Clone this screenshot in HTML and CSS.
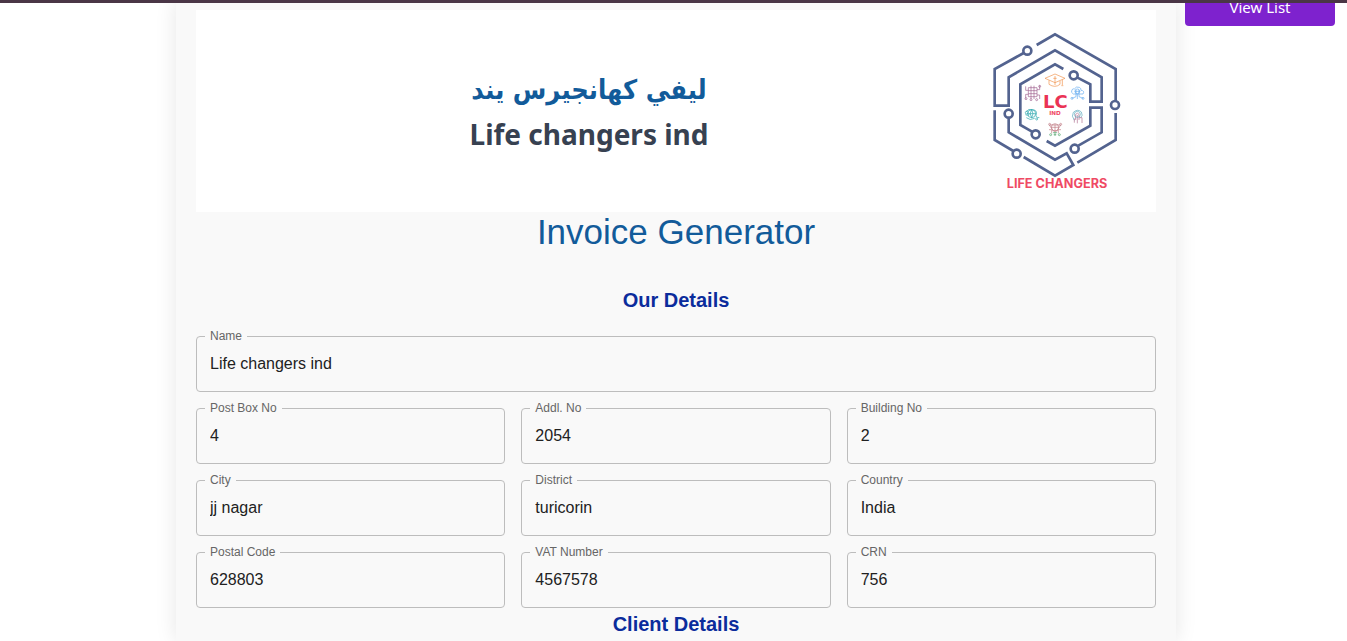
FILE: index.html
```html
<!DOCTYPE html>
<html lang="en">
<head>
    <meta charset="UTF-8">
    <meta name="viewport" content="width=device-width, initial-scale=1.0">
    <title>Invoice Generator</title>
    <link rel="stylesheet" href="styles.css">
</head>
<body>

<div class="top-bar"></div>
<button type="button" class="view-list-btn">View List</button>

<main class="invoice-container">
    <!-- Company banner -->
    <header class="banner">
        <div class="banner-names">
            <p class="name-arabic" lang="ar" dir="rtl">ليفي كهانجيرس يند</p>
            <p class="name-english">Life changers ind</p>
        </div>
        <svg class="logo" viewBox="0 3 450 510" role="img" aria-label="Life Changers logo">
            <!-- Circuit hexagons -->
            <g class="circuit">
                <path d="M170 60 L225 28 L407 132 V228 M407 264 V345 L292 413"/>
                <path d="M131 84 L44 132 V242 H86 V157 L225 76 L365 157 V230 H331 V178 L291 157"/>
                <path d="M44 256 V345 L100 378 M131 396 L225 452 L280 420 L260 385 L225 404 L86 322 V280"/>
                <path d="M250 132 L225 118 L121 178 V300 L156 320"/>
                <path d="M200 348 L225 362 L331 302 V248 H365 V322 L295 362"/>
                <circle cx="142" cy="77" r="12"/>
                <circle cx="405" cy="240" r="12"/>
                <circle cx="281" cy="151" r="12"/>
                <circle cx="86" cy="266" r="12"/>
                <circle cx="110" cy="386" r="12"/>
                <circle cx="167" cy="328" r="12"/>
                <circle cx="284" cy="371" r="12"/>
            </g>
            <!-- Graduation cap -->
            <g class="mini orange">
                <path d="M225 147 L255 160 L225 173 L195 160 Z M207 166 V178 Q225 190 240 178 V168 M247 164 V180 M244 182 H250 M225 153 V180 M220 160 H230"/>
            </g>
            <!-- Chip -->
            <g class="mini purple">
                <path d="M145 188 H171 V215 H145 Z M145 197 H171 M145 206 H171 M153 182 V222 M162 182 V222 M137 184 V196 H145 M179 181 V194 H171 M137 220 V208 H145 M179 222 V210 H171"/>
                <circle cx="138" cy="221" r="3"/><circle cx="179" cy="184" r="3"/><circle cx="153" cy="224" r="3"/><circle cx="170" cy="224" r="3"/>
            </g>
            <!-- Cloud -->
            <g class="mini blue">
                <path d="M280 207 Q271 203 276 194 Q280 190 283 192 Q288 183 298 187 Q304 190 303 196 Q315 197 309 207 H280 M284 199 H301 M288 195 V215 M297 195 V215 M288 215 L277 220 M297 215 L309 220 M292 207 V222"/>
                <circle cx="276" cy="220" r="3"/><circle cx="309" cy="220" r="3"/><circle cx="292" cy="199" r="7"/>
            </g>
            <!-- Globe with orbit -->
            <g class="mini teal">
                <circle cx="155" cy="266" r="12"/>
                <path d="M138 260 Q145 250 158 254 Q172 256 169 267 Q165 278 178 278 M139 278 Q150 288 164 280 M143 266 H167 M155 254 Q146 266 155 278 Q163 266 155 254 M136 269 Q143 273 148 269"/>
                <circle cx="140" cy="263" r="4"/><circle cx="170" cy="282" r="3"/>
            </g>
            <!-- Hand and gear -->
            <g class="mini mixed">
                <path class="cyan" d="M283 286 Q273 273 280 262 Q293 250 304 261 Q310 272 302 278"/>
                <path d="M287 285 V268 Q292 261 297 268 V285 M297 278 H306 V294 M287 279 L283 282 V293 M292 270 V295"/>
                <circle class="cyan" cx="292" cy="268" r="9"/>
            </g>
            <!-- Bulb network -->
            <g class="mini bulb">
                <path d="M208 300 H242 M208 300 L220 318 H231 L242 300 M213 307 H237 M207 314 H215 V325 M243 314 H235 V325 M225 298 V322"/>
                <path class="green" d="M219 323 H231 M221 329 H229 M225 322 V333"/>
                <circle cx="225" cy="307" r="11"/><circle cx="209" cy="298" r="3"/><circle cx="242" cy="298" r="3"/>
                <circle class="green" cx="212" cy="329" r="3"/><circle class="green" cx="238" cy="329" r="3"/>
            </g>
            <text class="logo-lc" x="226" y="250" text-anchor="middle">LC</text>
            <text class="logo-ind" x="225" y="270" text-anchor="middle">IND</text>
            <text class="logo-title" x="231" y="490" text-anchor="middle">LIFE CHANGERS</text>
        </svg>
    </header>

    <h1>Invoice Generator</h1>

    <form>
        <h2>Our Details</h2>
        <div class="field-grid">
            <div class="field full">
                <label for="name">Name</label>
                <input type="text" id="name" value="Life changers ind">
            </div>
            <div class="field">
                <label for="post-box">Post Box No</label>
                <input type="text" id="post-box" value="4">
            </div>
            <div class="field">
                <label for="addl-no">Addl. No</label>
                <input type="text" id="addl-no" value="2054">
            </div>
            <div class="field">
                <label for="building-no">Building No</label>
                <input type="text" id="building-no" value="2">
            </div>
            <div class="field">
                <label for="city">City</label>
                <input type="text" id="city" value="jj nagar">
            </div>
            <div class="field">
                <label for="district">District</label>
                <input type="text" id="district" value="turicorin">
            </div>
            <div class="field">
                <label for="country">Country</label>
                <input type="text" id="country" value="India">
            </div>
            <div class="field">
                <label for="postal-code">Postal Code</label>
                <input type="text" id="postal-code" value="628803">
            </div>
            <div class="field">
                <label for="vat-number">VAT Number</label>
                <input type="text" id="vat-number" value="4567578">
            </div>
            <div class="field">
                <label for="crn">CRN</label>
                <input type="text" id="crn" value="756">
            </div>
        </div>
        <h2>Client Details</h2>
    </form>
</main>

</body>
</html>
```
FILE: styles.css
```css
* {
    box-sizing: border-box;
}

body {
    margin: 0;
    padding-left: 5px;
    background: #fff;
    font-family: "Liberation Sans", Arial, sans-serif;
    overflow-x: hidden;
}

.top-bar {
    position: fixed;
    top: 0;
    left: 0;
    right: 0;
    height: 3px;
    background: #4a3646;
    z-index: 2;
}

.view-list-btn {
    position: fixed;
    top: -12px;
    right: 12px;
    width: 150px;
    height: 38px;
    border: none;
    border-radius: 4px;
    background: #7e22ce;
    color: #fff;
    font-family: "Noto Sans", sans-serif;
    font-size: 15px;
    cursor: pointer;
    z-index: 1;
}

.invoice-container {
    max-width: 1000px;
    min-height: 100vh;
    margin: 0 auto;
    padding: 10px 20px 0;
    background: #f9f9f9;
    box-shadow: 0 0 20px rgba(0, 0, 0, 0.1);
}

/* Banner */
.banner {
    display: grid;
    grid-template-columns: 1fr 150px;
    align-items: center;
    height: 202px;
    padding: 0 26px 0 2px;
    background: #fff;
}

.banner-names {
    padding-top: 2px;
    text-align: center;
}

.banner-names p {
    margin: 0;
    font-weight: 700;
    line-height: 44px;
}

.name-arabic {
    font-family: "DejaVu Sans Condensed", "DejaVu Sans", sans-serif;
    font-size: 27px;
    color: #125b9a;
}

.name-english {
    font-family: "Noto Sans", sans-serif;
    font-size: 28px;
    color: #374151;
}

.logo {
    width: 150px;
    height: 170px;
}

.circuit {
    fill: none;
    stroke: #53638f;
    stroke-width: 8;
}

.mini {
    fill: none;
    stroke-width: 2;
}

.orange { stroke: #f0914a; }
.purple { stroke: #a0618f; }
.blue { stroke: #62aaf0; }
.teal { stroke: #22a3ab; }
.mixed { stroke: #b0708f; }
.bulb { stroke: #c07a84; }
.cyan { stroke: #5aa9bd; }
.green { stroke: #4fa56a; }

.logo text {
    font-weight: 700;
    fill: #ef4a64;
}

.logo .logo-lc {
    font-family: "DejaVu Sans", sans-serif;
    font-size: 54px;
    fill: #ea3355;
}

.logo-ind {
    font-family: "DejaVu Sans", sans-serif;
    font-size: 17px;
}

.logo-title {
    font-family: Inter, sans-serif;
    font-size: 38px;
}

/* Headings */
h1 {
    margin: 0 0 32px;
    font-size: 35px;
    font-weight: 400;
    line-height: 40px;
    text-align: center;
    color: #125b9a;
}

h2 {
    margin: 0;
    font-size: 20px;
    font-weight: 700;
    line-height: 32px;
    text-align: center;
    color: #0b2c9c;
}

/* Form fields */
.field-grid {
    display: grid;
    grid-template-columns: repeat(3, 1fr);
    gap: 16px;
    padding-top: 20px;
}

.field {
    position: relative;
}

.full {
    grid-column: 1 / -1;
}

.field label {
    position: absolute;
    top: -8px;
    left: 9px;
    padding: 0 5px;
    background: #f9f9f9;
    color: #666;
    font-size: 12px;
    line-height: 16px;
}

.field input {
    display: block;
    width: 100%;
    height: 56px;
    padding: 0 13px;
    border: 1px solid #bdbdbd;
    border-radius: 4px;
    background: transparent;
    color: #212121;
    font-family: inherit;
    font-size: 16px;
}

.field input:focus {
    outline: none;
    border-color: #1976d2;
}
```
